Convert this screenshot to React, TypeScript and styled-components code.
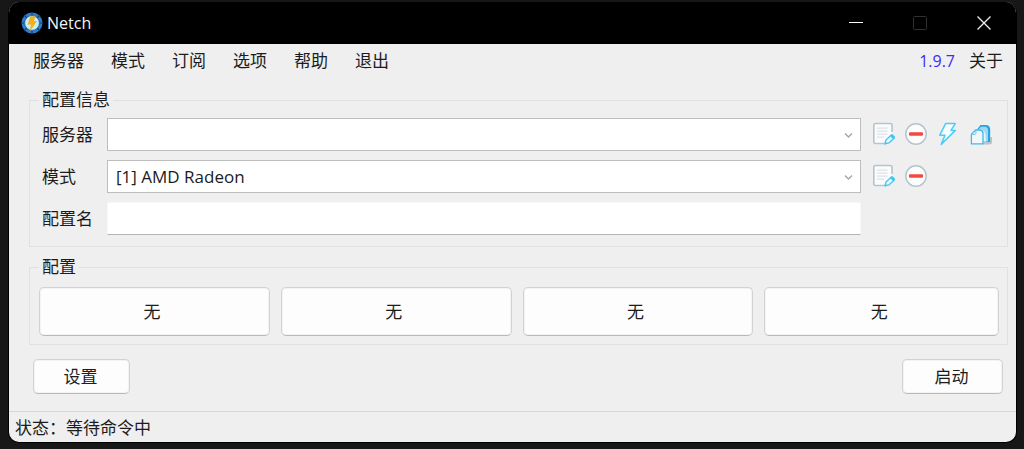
import React from "react";
import styled, { createGlobalStyle } from "styled-components";

const Global = createGlobalStyle`
  * { box-sizing: border-box; }
  html, body { margin: 0; background: #171717; }
  body, button, input, select {
    font-family: "Open Sans", "Noto Sans CJK SC", sans-serif;
    font-size: 17px;
    line-height: 24px;
    color: #1c1c1c;
  }
`;

const Desktop = styled.div`
  min-height: 100vh;
  padding: 2px 7px 7px 8px;
`;

const Window = styled.div`
  display: flex;
  flex-direction: column;
  border: 1px solid #000;
  border-top: 0;
  border-radius: 11px;
  background: #efefef;
  overflow: hidden;
`;

const TitleBar = styled.header`
  display: flex;
  align-items: center;
  height: 42px;
  padding-left: 12px;
  background: #000;
  color: #f4f4f4;
`;

const Title = styled.h1`
  flex: 1;
  margin: 0 0 0 4px;
  font-size: 16px;
  font-weight: 400;
`;

const WindowButton = styled.button`
  display: flex;
  align-items: center;
  justify-content: center;
  width: 64px;
  height: 42px;
  padding: 0;
  border: 0;
  background: transparent;
`;

const MenuBar = styled.nav`
  display: flex;
  align-items: center;
  gap: 27px;
  height: 34px;
  padding: 0 13px 0 24px;
`;

const MenuItem = styled.button`
  padding: 0;
  border: 0;
  background: transparent;
`;

const MenuEnd = styled.div`
  display: flex;
  gap: 14px;
  margin-left: auto;
`;

const VersionLink = styled.a`
  font-size: 16px;
  color: #3a2cf5;
  text-decoration: none;
`;

const Form = styled.form`
  display: flex;
  flex-direction: column;
  padding: 10px 8px 17px 20px;
`;

const Group = styled.fieldset<{ $top: number; $bottom: number }>`
  min-width: 0;
  margin: 0;
  padding: ${(p) => p.$top}px 8px ${(p) => p.$bottom}px 9px;
  border: 1px solid #e1e1e1;

  & + & { margin-top: 8px; }
`;

const Legend = styled.legend`
  padding: 0 3px;
`;

const Fields = styled.div`
  display: grid;
  grid-template-columns: 65px minmax(0, 1fr) 138px;
  row-gap: 9px;
  align-items: center;
  padding-left: 3px;
`;

const SelectBox = styled.div`
  position: relative;
  height: 33px;

  svg {
    position: absolute;
    right: 8px;
    top: 14px;
    pointer-events: none;
  }
`;

const Select = styled.select`
  appearance: none;
  width: 100%;
  height: 33px;
  padding: 0 28px 0 8px;
  border: 1px solid #bdbdbd;
  border-radius: 0;
  background: #fff;
`;

const TextBox = styled.input`
  width: 100%;
  height: 33px;
  padding: 0 8px;
  border: 1px solid #f7f7f7;
  border-bottom-color: #b4b4b4;
  background: #fff;
`;

const Tools = styled.div`
  display: flex;
  gap: 8px;
  padding: 0 0 2px 12px;
`;

const ToolButton = styled.button`
  display: flex;
  width: 24px;
  height: 24px;
  padding: 0;
  border: 0;
  background: transparent;
`;

const Profiles = styled.div`
  display: grid;
  grid-template-columns: 231fr 231fr 231fr 235fr;
  gap: 11px;
`;

const PushButton = styled.button<{ $width?: string; $tall?: boolean }>`
  width: ${(p) => p.$width ?? "100%"};
  height: ${(p) => (p.$tall ? "49px" : "35px")};
  padding: 0 ${(p) => (p.$tall ? "5px" : "2px")} 0 0;
  border: 1px solid #d2d2d2;
  border-bottom-color: #b9b9b9;
  border-radius: 5px;
  background: #fdfdfd;
  box-shadow: inset 0 0 0 1px #f3f3f3;
`;

const Actions = styled.div`
  display: flex;
  justify-content: space-between;
  padding: 14px 5px 0 4px;
`;

const StatusBar = styled.footer`
  padding: 4px 6px 2px;
  border-top: 1px solid #d6d6d6;
`;

const Logo = () => (
  <svg width="22" height="22" viewBox="0 0 22 22" aria-hidden="true">
    <circle cx="11" cy="11" r="10.5" fill="#2f7ccb" />
    <path d="M11 0v3M11 19v3M0 11h3M19 11h3M3 3l3 3M16 16l3 3M19 3l-3 3M3 19l3-3" stroke="#123c6d" strokeWidth="1.1" />
    <circle cx="11" cy="11" r="7.4" fill="#c8f0ee" stroke="#1d5594" strokeWidth="0.8" />
    <path d="M9.2 4.4h5.6l-2 4.5h3.2L8.7 19.6l1.4-7.2H6.7z" fill="#f9ad16" />
  </svg>
);

const Chevron = () => (
  <svg width="9" height="7" viewBox="0 0 9 7" aria-hidden="true">
    <path d="M1 1.5l3.5 3.5L8 1.5" fill="none" stroke="#a8a8a8" strokeWidth="1.5" />
  </svg>
);

const EditIcon = () => (
  <svg width="24" height="24" viewBox="0 0 24 24" fill="none" aria-hidden="true">
    <path d="M19 13V3.2Q19 1.5 17.3 1.5H2.5Q.8 1.5 .8 3.2v16.6q0 1.7 1.7 1.7H10l9-9z" fill="#fbfbfb" />
    <path d="M19 10V3.2Q19 1.5 17.3 1.5H2.5Q.8 1.5 .8 3.2v16.6q0 1.7 1.7 1.7H11" stroke="#b4c5cd" strokeWidth="1.6" />
    <path d="M4 6.2h10.5M4 9.2h10.5M4 12.2h10.5M4 15.2h7" stroke="#dce4e8" strokeWidth="1.2" />
    <path d="M12 21.8l1-3.8 5.3-5.1 3 3-5.4 5z" fill="#eafaff" stroke="#45c8f5" strokeWidth="1.4" strokeLinejoin="round" />
    <path d="M17 14l2.2-2 3 3-2.2 2z" fill="#35c7fa" />
    <path d="M11.4 22.6l.8-2.8 2 2z" fill="#35c7fa" />
  </svg>
);

const RemoveIcon = () => (
  <svg width="24" height="24" viewBox="0 0 24 24" aria-hidden="true">
    <circle cx="11" cy="12" r="10.2" fill="#fcfcfc" stroke="#b5c4cb" strokeWidth="1.5" />
    <rect x="4" y="10.2" width="14" height="3.6" rx="1" fill="#f4483e" />
  </svg>
);

const BoltIcon = () => (
  <svg width="24" height="24" viewBox="0 0 24 24" aria-hidden="true">
    <path d="M8.6 1.6h9.6L14 8.4h4.4L4.2 22.4 8 13.2H2.8z" fill="#f6fcff" stroke="#4bcdf9" strokeWidth="1.5" strokeLinejoin="round" />
  </svg>
);

const CopyIcon = () => (
  <svg width="24" height="24" viewBox="0 0 24 24" strokeLinejoin="round" aria-hidden="true">
    <path d="M14 21.5h6.5q1.6 0 1.6-1.6V15" fill="none" stroke="#c6c0bd" strokeWidth="1.8" />
    <path d="M7.6 8.2L11.4 3h6.2q3.6.8 3.6 4.6v12.6H14z" fill="#27a5de" />
    <path d="M9.2 7.8L12 4.8h4.4q2.6.6 2.6 3.6v11H14V11q-.4-2.6-2-2.8z" fill="#9ed8f2" />
    <path d="M10 7.4q4.6-.4 6.4 4.2l.6 7.8h-3V10.6L12 8z" fill="#e3f4fb" />
    <path d="M6.6 8h4.6q2.8.4 2.8 3.6v10.2H2.4V12.4z" fill="#f1f8fb" stroke="#45b8e6" strokeWidth="1.3" />
    <path d="M2.6 12.4h3.6q1-.4.8-4.2" fill="none" stroke="#6cc6ea" strokeWidth="1" />
  </svg>
);

const menus = ["服务器", "模式", "订阅", "选项", "帮助", "退出"];

export default function App() {
  return (
    <Desktop>
      <Global />
      <Window>
        <TitleBar>
          <Logo />
          <Title>Netch</Title>
          <WindowButton aria-label="最小化">
            <svg width="14" height="14"><path d="M0 6.5h14" stroke="#fff" /></svg>
          </WindowButton>
          <WindowButton aria-label="最大化" disabled>
            <svg width="14" height="14"><rect x=".5" y=".5" width="13" height="13" rx="1" fill="none" stroke="#303030" /></svg>
          </WindowButton>
          <WindowButton aria-label="关闭">
            <svg width="14" height="14"><path d="M.5 .5l13 13M13.5 .5l-13 13" stroke="#f0f0f0" strokeWidth="1.3" /></svg>
          </WindowButton>
        </TitleBar>
        <MenuBar>
          {menus.map((m) => <MenuItem key={m}>{m}</MenuItem>)}
          <MenuEnd>
            <VersionLink href="#version">1.9.7</VersionLink>
            <MenuItem>关于</MenuItem>
          </MenuEnd>
        </MenuBar>
        <Form onSubmit={(e) => e.preventDefault()}>
          <Group $top={6} $bottom={11}>
            <Legend>配置信息</Legend>
            <Fields>
              <label htmlFor="server">服务器</label>
              <SelectBox>
                <Select id="server"><option></option></Select>
                <Chevron />
              </SelectBox>
              <Tools>
                <ToolButton type="button" aria-label="编辑服务器"><EditIcon /></ToolButton>
                <ToolButton type="button" aria-label="删除服务器"><RemoveIcon /></ToolButton>
                <ToolButton type="button" aria-label="测速"><BoltIcon /></ToolButton>
                <ToolButton type="button" aria-label="复制链接"><CopyIcon /></ToolButton>
              </Tools>
              <label htmlFor="mode">模式</label>
              <SelectBox>
                <Select id="mode"><option>[1] AMD Radeon</option></Select>
                <Chevron />
              </SelectBox>
              <Tools>
                <ToolButton type="button" aria-label="编辑模式"><EditIcon /></ToolButton>
                <ToolButton type="button" aria-label="删除模式"><RemoveIcon /></ToolButton>
              </Tools>
              <label htmlFor="profile">配置名</label>
              <TextBox id="profile" type="text" />
            </Fields>
          </Group>
          <Group $top={8} $bottom={8}>
            <Legend>配置</Legend>
            <Profiles>
              {[1, 2, 3, 4].map((n) => <PushButton key={n} type="button" $tall>无</PushButton>)}
            </Profiles>
          </Group>
          <Actions>
            <PushButton type="button" $width="97px">设置</PushButton>
            <PushButton type="submit" $width="101px">启动</PushButton>
          </Actions>
        </Form>
        <StatusBar role="status">状态：等待命令中</StatusBar>
      </Window>
    </Desktop>
  );
}
